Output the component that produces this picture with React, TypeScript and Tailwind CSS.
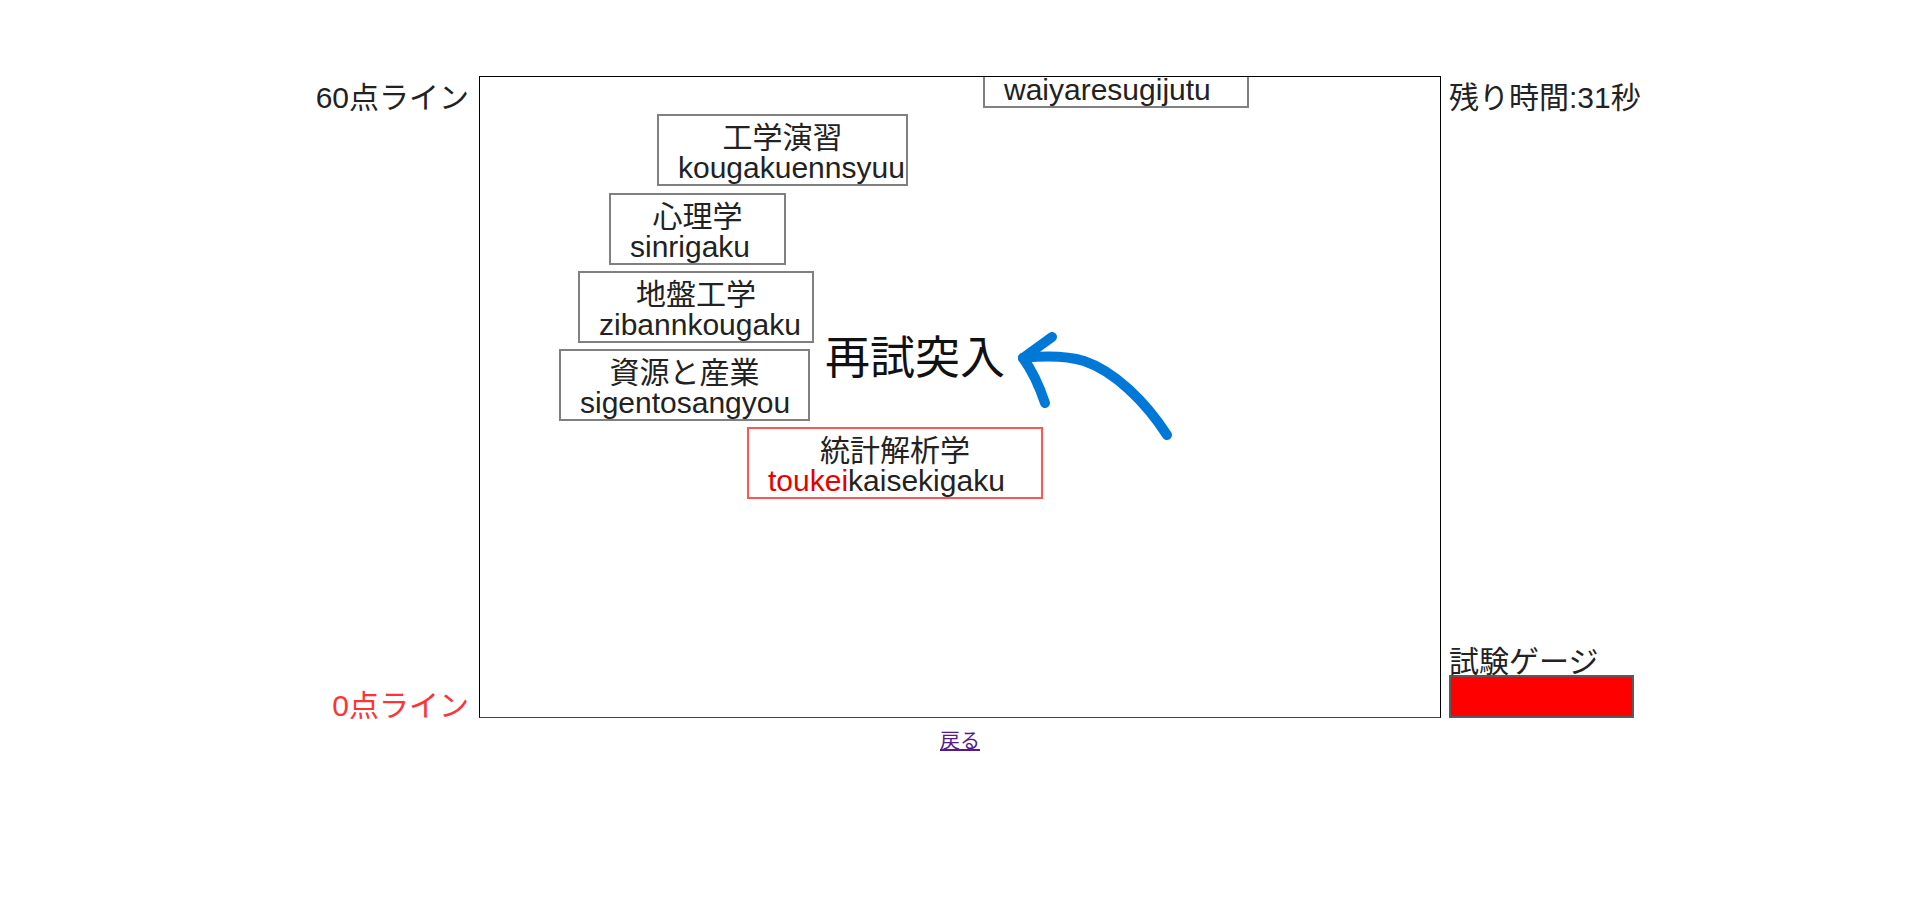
const font = "font-['Liberation_Sans','Noto_Sans_CJK_JP',sans-serif]";

type Word = {
  jp: string;
  typed: string;
  rest: string;
  pos: string;
  active?: boolean;
};

// falling words, placed on the play field (the first one has its kanji line above the top edge)
const words: Word[] = [
  { jp: '', typed: '', rest: 'waiyaresugijutu', pos: 'left-[503px] top-[-41px] w-[266px]' },
  { jp: '工学演習', typed: '', rest: 'kougakuennsyuu', pos: 'left-[177px] top-[37px] w-[251px]' },
  { jp: '心理学', typed: '', rest: 'sinrigaku', pos: 'left-[129px] top-[116px] w-[177px]' },
  { jp: '地盤工学', typed: '', rest: 'zibannkougaku', pos: 'left-[98px] top-[194px] w-[236px]' },
  { jp: '資源と産業', typed: '', rest: 'sigentosangyou', pos: 'left-[79px] top-[272px] w-[251px]' },
  { jp: '統計解析学', typed: 'toukei', rest: 'kaisekigaku', pos: 'left-[267px] top-[350px] w-[296px]', active: true },
];

function WordBox({ w }: { w: Word }) {
  return (
    <div
      className={`absolute box-border h-[72px] border-2 bg-white text-[30px] text-[#222] ${w.pos} ${
        w.active ? 'border-[#ff5555]' : 'border-[#808080]'
      }`}
    >
      <div className="h-[37px] pt-[7px] text-center leading-[30px] whitespace-nowrap">{w.jp}</div>
      <div className="pt-[2px] pl-[19px] leading-[26px] whitespace-nowrap">
        {w.typed && <span className="text-[#e60000]">{w.typed}</span>}
        {w.rest}
      </div>
    </div>
  );
}

export default function App() {
  return (
    <div className={`min-h-screen bg-white ${font} text-[#222]`}>
      <div className="flex flex-col items-center pt-[76px]">
        <div className="flex">
          {/* left labels */}
          <div className="flex w-[200px] flex-col justify-between pr-[10px] pt-[5px] text-right text-[30px]">
            <div className="leading-[34px]">60点ライン</div>
            <div className="-mb-[5px] leading-[34px] text-[#ff3333]">0点ライン</div>
          </div>

          {/* play field */}
          <div className="relative box-border h-[642px] w-[962px] overflow-hidden border border-black border-b-[#e00000]">
            {words.map((w) => (
              <WordBox key={w.rest} w={w} />
            ))}

            <div className="absolute left-[345px] top-[259px] text-[45px] leading-[45px] whitespace-nowrap text-[#111]">
              再試突入
            </div>

            <svg className="absolute left-0 top-0" width="960" height="640" viewBox="0 0 960 640">
              <g fill="none" stroke="#0078d7" strokeWidth="10" strokeLinecap="round" strokeLinejoin="round">
                <path d="M687 358 C665 324 634 294 604 284 C584 278 562 279 543 281" />
                <path d="M543 281 L572 260" />
                <path d="M543 281 Q556 299 565 326" />
              </g>
            </svg>
          </div>

          {/* right side */}
          <div className="flex w-[200px] flex-col justify-between pl-[8px] pt-[5px] text-[30px]">
            <div className="leading-[34px] whitespace-nowrap">残り時間:31秒</div>
            <div>
              <div className="leading-[26px] whitespace-nowrap">試験ゲージ</div>
              <div className="box-border h-[43px] w-[185px] border-2 border-[#5a5a5a] bg-[#ff0000]" />
            </div>
          </div>
        </div>

        <a href="#" className="mt-[12px] text-[20px] leading-[23px] text-[#551a8b] underline">
          戻る
        </a>
      </div>
    </div>
  );
}
